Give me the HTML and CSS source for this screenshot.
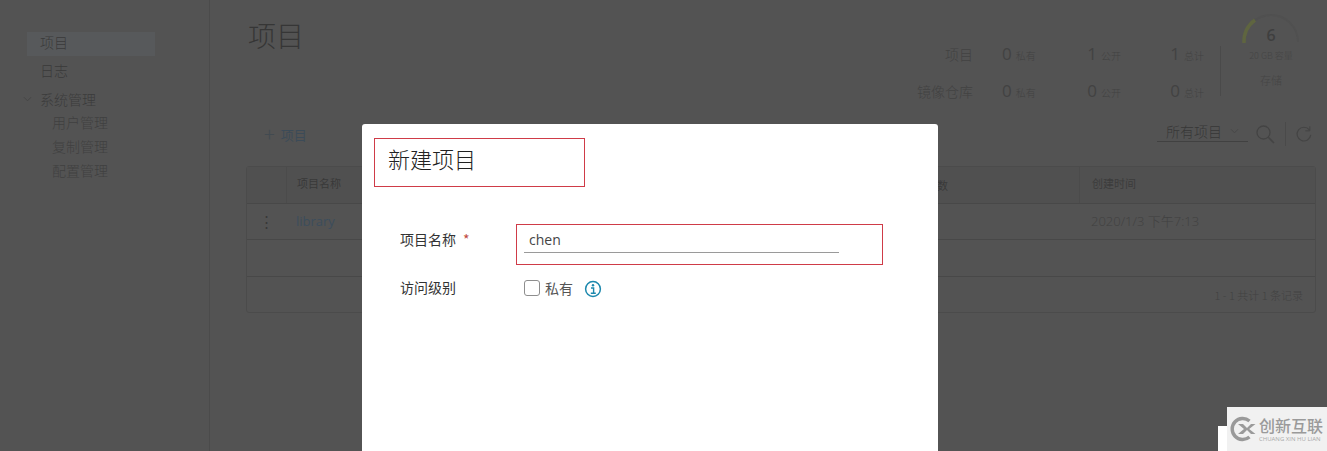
FILE: index.html
```html
<!DOCTYPE html>
<html lang="zh">
<head>
<meta charset="utf-8">
<title>项目</title>
<link rel="stylesheet" href="styles.css">
</head>
<body>
<div class="app">
  <aside class="sidebar">
    <a class="nav-item active">项目</a>
    <a class="nav-item second-item">日志</a>
    <div class="nav-group">
      <svg class="chev" viewBox="0 0 10 6" width="9" height="6"><path d="M1 1l4 4 4-4" fill="none" stroke="#444" stroke-width="1"/></svg>
      <span>系统管理</span>
    </div>
    <a class="nav-sub">用户管理</a>
    <a class="nav-sub">复制管理</a>
    <a class="nav-sub">配置管理</a>
  </aside>
  <main class="main">
    <header class="head">
      <h1 class="page-title">项目</h1>
      <div class="summary">
        <div class="stats">
          <span class="stat-name">项目</span>
          <span class="stat s1"><b>0</b><small>私有</small></span>
          <span class="stat s2"><b>1</b><small>公开</small></span>
          <span class="stat s3"><b>1</b><small>总计</small></span>
          <span class="stat-name">镜像仓库</span>
          <span class="stat s1"><b>0</b><small>私有</small></span>
          <span class="stat s2"><b>0</b><small>公开</small></span>
          <span class="stat s3"><b>0</b><small>总计</small></span>
        </div>
        <div class="storage">
          <svg class="gauge" viewBox="0 0 60 40" width="60" height="40">
            <path d="M3 28 A27 27 0 0 1 57 28" fill="none" stroke="#505050" stroke-width="2"/>
            <path d="M3 29 A27 27 0 0 1 14 6" fill="none" stroke="#5f6540" stroke-width="3.5"/>
          </svg>
          <span class="gauge-num">6</span>
          <span class="gauge-sub">20 GB 容量</span>
          <span class="gauge-label">存储</span>
        </div>
      </div>
    </header>
    <div class="toolbar">
      <a class="add"><span class="plus">+</span>项目</a>
      <div class="tools">
        <span class="select">所有项目<svg viewBox="0 0 10 6" width="9" height="6"><path d="M1 1l4 4 4-4" fill="none" stroke="#464646"/></svg></span>
        <svg class="tool search" viewBox="0 0 20 20" width="20" height="20"><circle cx="8.5" cy="8.5" r="6.5" fill="none" stroke="#444" stroke-width="1.3"/><path d="M13 13l6 6" stroke="#444" stroke-width="1.6"/></svg>
        <i class="tool-sep"></i>
        <svg class="tool" viewBox="0 0 20 20" width="18" height="18"><path d="M16 5.5A7.6 7.6 0 1 0 17.5 11" fill="none" stroke="#444" stroke-width="1.3"/><path d="M16.5 1.5v5h-5" fill="none" stroke="#444" stroke-width="1.1"/></svg>
      </div>
    </div>
    <section class="table">
      <div class="row thead">
        <span class="c-act"></span>
        <span class="c-name">项目名称</span>
        <span class="c-mid">镜像仓库数</span>
        <span class="c-time">创建时间</span>
      </div>
      <div class="row tbody">
        <span class="c-act dots">⋮</span>
        <span class="c-name link">library</span>
        <span class="c-mid">0</span>
        <span class="c-time">2020/1/3 下午7:13</span>
      </div>
      <div class="row empty"></div>
      <div class="foot">1 - 1 共计 1 条记录</div>
    </section>
  </main>
</div>

<div class="overlay">
  <div class="modal">
    <div class="modal-title"><h2>新建项目</h2></div>
    <div class="form-row first">
      <label class="label">项目名称<em>*</em></label>
      <div class="input-box"><div class="input">chen</div></div>
    </div>
    <div class="form-row second">
      <label class="label">访问级别</label>
      <div class="check-line">
        <i class="checkbox"></i>
        <span class="check-text">私有</span>
        <svg class="info" viewBox="0 0 18 18" width="18" height="18"><circle cx="9" cy="9" r="7.4" fill="none" stroke="#1c88ad" stroke-width="1.5"/><circle cx="9" cy="5.3" r="1.2" fill="#1c88ad"/><path d="M7 8h2.6v5M6.8 13.2h5" fill="none" stroke="#1c88ad" stroke-width="1.4"/></svg>
      </div>
    </div>
  </div>
</div>

<div class="wm-patch"></div>
<div class="watermark">
  <svg class="wm-logo" viewBox="0 0 26 26" width="26" height="26"><path d="M19.5 5A10.5 10.5 0 1 0 19.5 21" fill="none" stroke="#9a9a9a" stroke-width="3.4"/><path d="M8 8h5l4 4 4-4h4.5l-6.3 5 6.3 5H21l-4-4-4 4H8l6-5z" fill="#9a9a9a"/></svg>
  <div class="wm-text">
    <span class="wm-cn">创新互联</span>
    <span class="wm-en">CHUANG XIN HU LIAN</span>
  </div>
</div>
</body>
</html>
```
FILE: styles.css
```css
* { box-sizing: border-box; }
html, body { margin: 0; height: 100%; }
body {
  width: 1327px;
  height: 451px;
  overflow: hidden;
  position: relative;
  background: #535353;
  color: #3a3a3a;
  font-family: "Noto Sans CJK SC", "Open Sans", sans-serif;
  font-size: 14px;
  font-weight: 300;
}
.app { display: flex; height: 451px; }

/* sidebar */
.sidebar {
  width: 210px;
  flex: none;
  border-right: 1px solid #4b4b4b;
  padding-top: 32px;
  display: flex;
  flex-direction: column;
}
.nav-item {
  margin-left: 27px;
  width: 128px;
  height: 24px;
  line-height: 20px;
  padding-left: 13px;
  margin-bottom: 4px;
  color: #3a3a3a;
}
.second-item { margin-bottom: 3px; }
.active { background: #57595b; }
.nav-group {
  display: flex;
  align-items: center;
  height: 23px;
  padding-left: 23px;
  color: #3b3b3b;
}
.chev { margin-right: 8px; }
.nav-sub {
  height: 24px;
  line-height: 24px;
  padding-left: 52px;
  color: #404040;
}

/* main */
.main { flex: 1; min-width: 0; padding: 0 11px 0 36px; }
.head { display: flex; justify-content: space-between; height: 112px; }
.page-title {
  margin: 14px 0 0;
  font-size: 28px;
  line-height: 42px;
  font-weight: 300;
  color: #363636;
  padding-left: 2px;
}
.summary { display: flex; padding-top: 14px; }
.stats {
  display: grid;
  grid-template-columns: 56px 86px 62px 83px;
  grid-auto-rows: 37px;
  margin-top: 21px;
  margin-right: 16px;
  height: 74px;
  align-items: center;
}
.stat-name { text-align: right; color: #424242; font-size: 14px; }
.stat { display: flex; align-items: baseline; justify-content: flex-end; color: #424242; }
.stat b { font-family: "Open Sans", sans-serif; font-size: 17px; font-weight: 400; line-height: 20px; }
.stat small { font-size: 10px; margin-left: 4px; color: #424242; }
.s1 { justify-content: flex-start; padding-left: 29px; }
.storage {
  width: 96px;
  height: 50px;
  margin-top: 32px;
  border-left: 1px solid #4a4a4a;
  position: relative;
  display: flex;
  flex-direction: column;
  align-items: center;
  padding: 4px 0 0 5px;
}
.gauge { position: absolute; left: 20px; top: -32px; }
.gauge-num {
  position: absolute;
  left: 5px; right: 0; top: -22px;
  text-align: center;
  font: 600 16px/22px "Open Sans", sans-serif;
  color: #3f3f3f;
}
.gauge-sub { font-size: 9px; line-height: 12px; color: #454545; white-space: nowrap; }
.gauge-label { font-size: 11px; line-height: 16px; margin-top: 10px; color: #454545; }

.toolbar {
  display: flex;
  justify-content: space-between;
  align-items: center;
  height: 44px;
  margin-bottom: 10px;
}
.add { margin-left: 18px; color: #3c4b58; font-size: 13px; font-weight: 400; display: flex; align-items: center; }
.plus { font-size: 20px; line-height: 20px; margin-right: 6px; color: #424a50; font-weight: 300; }
.tools { display: flex; align-items: center; margin-right: 3px; }
.select {
  width: 91px;
  height: 22px;
  margin-bottom: 6px;
  border-bottom: 1px solid #414141;
  padding-left: 9px;
  font-size: 14px;
  line-height: 20px;
  color: #373737;
  display: flex;
  align-items: center;
  gap: 8px;
  white-space: nowrap;
}
.tool { margin-left: 8px; flex: none; }
.search { margin-left: 7px; }
.tool-sep { width: 1px; height: 24px; background: #4a4a4a; margin-left: 10px; margin-right: 1px; }

/* table */
.table {
  height: 147px;
  border: 1px solid #4b4b4b;
  border-radius: 3px;
  display: flex;
  flex-direction: column;
  font-size: 13px;
}
.row { display: flex; align-items: center; flex: none; border-bottom: 1px solid #484848; }
.thead { height: 37px; font-size: 11px; font-weight: 400; color: #393939; background: #505050; }
.tbody { height: 36px; padding-bottom: 2px; }
.empty { height: 37px; }
.c-act { width: 39px; }
.c-name { flex: 1; padding-left: 10px; }
.thead .c-name { border-left: 1px solid #4b4b4b; height: 36px; line-height: 33px; }
.c-mid { width: 198px; padding-left: 12px; }
.c-time { width: 236px; padding-left: 12px; color: #414141; }
.thead .c-time { border-left: 1px solid #4b4b4b; height: 36px; line-height: 33px; color: #3c3c3c; }
.dots { text-align: center; font-size: 15px; color: #383838; }
.link { color: #3c4d5c; font-family: "Open Sans", sans-serif; font-weight: 400; }
.tbody .c-time { font-family: "Open Sans", "Noto Sans CJK SC", sans-serif; }
.foot {
  flex: 1;
  display: flex;
  align-items: center;
  justify-content: flex-end;
  padding-right: 12px;
  font-size: 11px;
  color: #424242;
}

/* modal */
.overlay { position: absolute; inset: 0; }
.modal {
  position: absolute;
  left: 362px;
  top: 124px;
  width: 576px;
  height: 340px;
  background: #fff;
  border-radius: 3px;
  padding: 14px 0 0 12px;
  color: #3a3a3a;
}
.modal-title {
  width: 211px;
  height: 49px;
  border: 1px solid #cf3b48;
  padding-left: 13px;
  display: flex;
  align-items: center;
}
.modal-title h2 { margin: 0 0 10px; font-size: 22px; line-height: 32px; font-weight: 300; color: #222; }
.form-row { display: flex; align-items: flex-start; padding-left: 26px; }
.first { margin-top: 37px; }
.second { margin-top: 9px; }
.label {
  width: 116px;
  flex: none;
  font-size: 14px;
  font-weight: 400;
  line-height: 24px;
  color: #333;
}
.first .label { padding-top: 3px; }
.second .label { line-height: 26px; }
.label em { color: #c0493e; font-style: normal; margin-left: 7px; }
.input-box {
  width: 367px;
  height: 41px;
  border: 1px solid #cf3b48;
  padding: 0 0 0 7px;
}
.input {
  width: 315px;
  height: 28px;
  border-bottom: 1px solid #9a9a9a;
  padding: 6px 0 0 5px;
  font: 400 14px/18px "Open Sans", sans-serif;
  color: #444;
}
.check-line { display: flex; align-items: center; height: 28px; padding-left: 8px; }
.checkbox {
  width: 16px;
  height: 16px;
  border: 1px solid #8e8e8e;
  border-radius: 3px;
  background: #fff;
  margin-right: 5px;
}
.check-text { font-size: 14px; font-weight: 400; color: #555; }
.info { margin: 1px 0 0 11px; }

/* watermark */
.wm-patch { position: absolute; left: 1218px; top: 426px; width: 9px; height: 25px; background: #fff; }
.watermark {
  position: absolute;
  left: 1227px;
  top: 407px;
  width: 100px;
  height: 44px;
  background: #f1f1f1;
  display: flex;
  align-items: center;
  padding: 0 0 0 3px;
  gap: 3px;
}
.wm-logo { flex: none; }
.wm-text { display: flex; flex-direction: column; white-space: nowrap; margin-top: -2px; }
.wm-cn { font-size: 16px; line-height: 22px; height: 22px; font-weight: 500; color: #9a9a9a; }
.wm-en { font: 400 6px/7px "Open Sans", sans-serif; color: #a9a9a9; }
```
